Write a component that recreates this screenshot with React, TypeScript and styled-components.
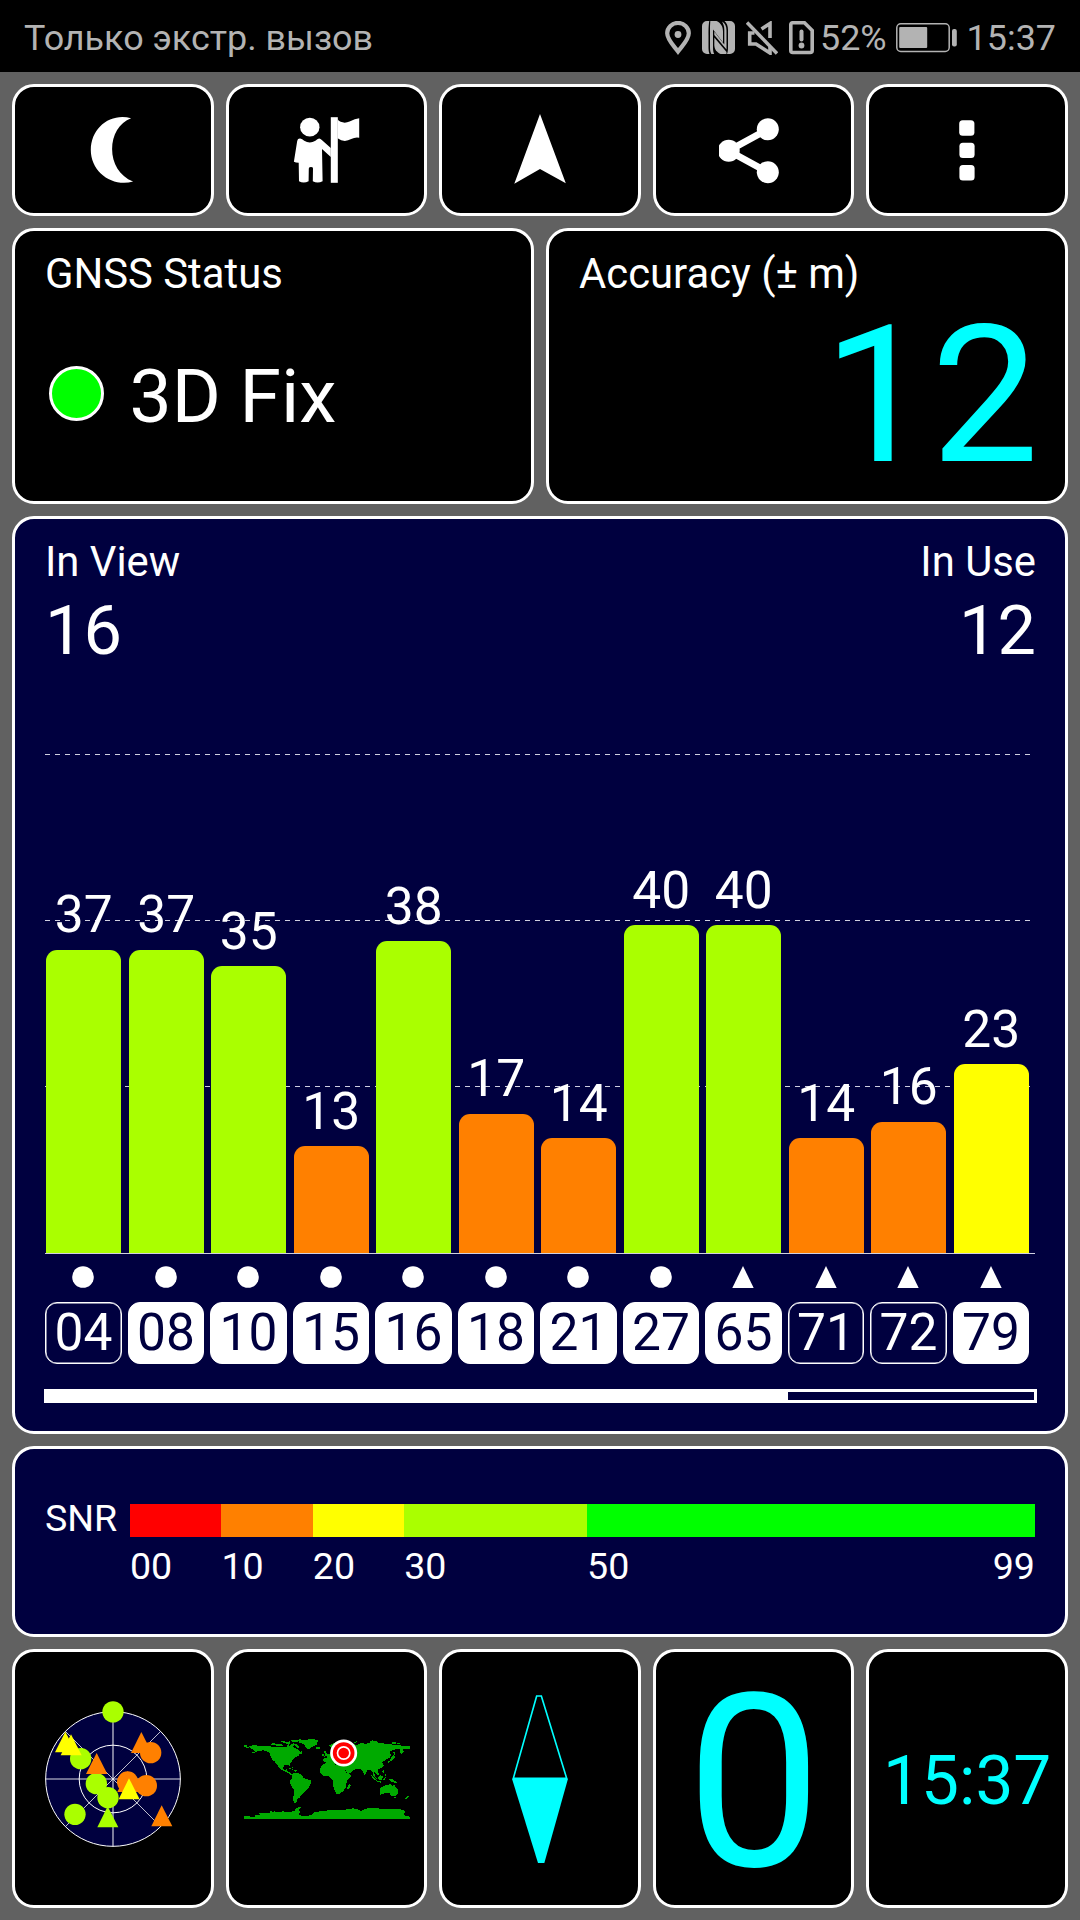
import React from 'react';
import styled, { createGlobalStyle } from 'styled-components';

const NAVY = '#00003f';
const LIME = '#aaff00';
const ORANGE = '#ff8000';
const YELLOW = '#ffff00';
const CYAN = '#00ffff';
const MUTED = '#b3b3b3';

const GlobalStyle = createGlobalStyle`
  *, *::before, *::after { box-sizing: border-box; }
  body { margin: 0; background: #616161; }
`;

const Screen = styled.div`
  width: 1080px;
  height: 1920px;
  display: flex;
  flex-direction: column;
  background: #616161;
  color: #fff;
  font-family: Roboto, 'Noto Sans', sans-serif;
  overflow: hidden;
`;

const StatusBar = styled.header`
  height: 72px;
  flex: none;
  display: flex;
  align-items: center;
  justify-content: space-between;
  padding: 3px 24px 0 24px;
  background: #000;
  color: ${MUTED};
  font-size: 35.9px;
  line-height: 44px;
  white-space: nowrap;
`;

const StatusIcons = styled.div`
  display: flex;
  align-items: center;
  svg { display: block; flex: none; }
`;

const SystemIcons = styled.div`
  display: flex;
  gap: 11px;
  margin-right: 6px;
`;

const BatteryIcon = styled.svg`
  margin: 0 10px 0 9px;
`;

const Board = styled.main`
  flex: 1;
  display: grid;
  grid-template-rows: 132px 276px 918px 191px 259px;
  gap: 12px;
  padding: 12px;
`;

const ButtonRow = styled.div`
  display: grid;
  grid-template-columns: repeat(5, 1fr);
  gap: 12px;
`;

const HalfRow = styled.div`
  display: grid;
  grid-template-columns: 1fr 1fr;
  gap: 12px;
`;

const Panel = styled.section<{ $navy?: boolean }>`
  border: 3px solid #fff;
  border-radius: 22px;
  background: ${(p) => (p.$navy ? NAVY : '#000')};
  min-width: 0;
`;

const Tile = styled(Panel)`
  display: flex;
  align-items: center;
  justify-content: center;
  svg { display: block; }
`;

const InfoPanel = styled(Panel)`
  padding: 18.5px 30px 0;
  display: flex;
  flex-direction: column;
`;

const Heading = styled.h2`
  margin: 0;
  font-size: 41.8px;
  line-height: 48px;
  font-weight: 400;
  white-space: nowrap;
`;

const FixRow = styled.div`
  display: flex;
  align-items: center;
  gap: 26px;
  height: 90px;
  margin: 53px 0 0 3.5px;
  font-size: 75px;
  line-height: 90px;
`;

const FixLamp = styled.span`
  width: 55px;
  height: 55px;
  margin-top: -5px;
  border-radius: 50%;
  border: 3px solid #fff;
  background: #00ff00;
`;

const Accuracy = styled.div`
  margin: 8px -4px 0 0;
  text-align: right;
  color: ${CYAN};
  font-size: 192px;
  line-height: 180px;
`;

const SatellitePanel = styled(Panel)`
  padding: 19px 28px 27px 29px;
  display: flex;
  flex-direction: column;
`;

const Counts = styled.div`
  display: flex;
  justify-content: space-between;
  padding: 0 1px;
`;

const Count = styled.div<{ $end?: boolean }>`
  text-align: ${(p) => (p.$end ? 'right' : 'left')};
`;

const CountValue = styled.div`
  font-size: 68.5px;
  line-height: 80px;
  margin-top: 5px;
`;

const Chart = styled.div`
  position: relative;
  height: 583px;
  margin: 0 2px 0 1px;
  border-bottom: 1px solid #d0d0e0;
  display: grid;
  grid-template-columns: repeat(12, 1fr);
  align-items: end;
`;

const GridLine = styled.div`
  position: absolute;
  left: 0;
  right: 0;
  height: 1px;
  background: repeating-linear-gradient(90deg, #cfcfdf 0 5px, transparent 5px 10px);
`;

const BarSlot = styled.div`
  position: relative;
  display: flex;
  flex-direction: column;
  align-items: center;
  padding: 0 6.2px 0 1px;
`;

const BarValue = styled.div`
  font-size: 51.5px;
  line-height: 60px;
  margin-bottom: 4.5px;
`;

const BarFill = styled.div`
  width: 100%;
  border-radius: 11px 11px 0 0;
`;

const SatelliteRow = styled.div`
  display: grid;
  grid-template-columns: repeat(12, 1fr);
  margin: 12px 2px 0 1px;
`;

const Satellite = styled.div`
  display: flex;
  flex-direction: column;
  align-items: center;
  gap: 14px;
  padding-right: 5.7px;
  svg { display: block; }
`;

const Chip = styled.div<{ $used: boolean }>`
  width: 100%;
  height: 62px;
  border: 1px solid #fff;
  box-shadow: inset 0 0 0 0.5px #fff;
  border-radius: 12px;
  display: flex;
  align-items: center;
  justify-content: center;
  font-size: 51.5px;
  line-height: 58px;
  background: ${(p) => (p.$used ? '#fff' : 'transparent')};
  color: ${(p) => (p.$used ? NAVY : '#fff')};
`;

const PageTrack = styled.div`
  height: 14px;
  margin-top: 25px;
  border: 3px solid #fff;
`;

const PageThumb = styled.div`
  width: 75.1%;
  height: 100%;
  background: #fff;
`;

const SnrPanel = styled(Panel)`
  padding: 47px 30px 0;
  display: flex;
  font-size: 37.6px;
`;

const SnrLabel = styled.div`
  width: 85px;
  line-height: 44px;
`;

const SnrScale = styled.div`
  flex: 1;
  display: grid;
  grid-template-columns: 10fr 10fr 10fr 20fr 49fr;
  grid-template-rows: 33.5px 44px;
  row-gap: 6px;
  padding-top: 7.5px;
`;

const SnrBand = styled.div<{ $color: string }>`
  background: ${(p) => p.$color};
`;

const SnrTick = styled.div`
  display: flex;
  justify-content: space-between;
  line-height: 46px;
`;

const Speed = styled.div`
  padding: 10px 0 0 1px;
  color: ${CYAN};
  font-size: 241px;
  line-height: 240px;
`;

const Clock = styled.div`
  padding-top: 4px;
  color: ${CYAN};
  font-size: 67.6px;
  line-height: 84px;
  white-space: nowrap;
`;

type Sat = { id: string; snr: number; color: string; used: boolean; glonass?: boolean };

const satellites: Sat[] = [
  { id: '04', snr: 37, color: LIME, used: false },
  { id: '08', snr: 37, color: LIME, used: true },
  { id: '10', snr: 35, color: LIME, used: true },
  { id: '15', snr: 13, color: ORANGE, used: true },
  { id: '16', snr: 38, color: LIME, used: true },
  { id: '18', snr: 17, color: ORANGE, used: true },
  { id: '21', snr: 14, color: ORANGE, used: true },
  { id: '27', snr: 40, color: LIME, used: true },
  { id: '65', snr: 40, color: LIME, used: true, glonass: true },
  { id: '71', snr: 14, color: ORANGE, used: false, glonass: true },
  { id: '72', snr: 16, color: ORANGE, used: false, glonass: true },
  { id: '79', snr: 23, color: YELLOW, used: true, glonass: true },
];

const PX_PER_DB = 8.2;

const bands = [
  { color: '#ff0000', from: '00' },
  { color: ORANGE, from: '10' },
  { color: YELLOW, from: '20' },
  { color: LIME, from: '30' },
  { color: '#00ff00', from: '50', to: '99' },
];

const PinIcon = () => (
  <svg width="26" height="34" viewBox="664 20 26 34" fill="none">
    <path d="M677 50.5C672 44 666.2 38.5 666.2 32.3a10.8 10.4 0 0 1 21.6 0C687.8 38.5 682 44 677 50.5Z" stroke={MUTED} strokeWidth="4.2" />
    <circle cx="677" cy="33.5" r="3.4" fill={MUTED} />
  </svg>
);

const NfcIcon = () => (
  <svg width="33" height="34" viewBox="0 0 33 34">
    <path fill={MUTED} d="M5 0h2.300c-.6 3-.8 7-.8 14v12c0 3 .3 5 1 7H5a5 5 0 0 1-5-5V5a5 5 0 0 1 5-5Z" />
    <path fill={MUTED} d="M8.300 0H14.500c4.500 2 6.500 5.500 6.500 10.500v11L11 8.500v18c0 3 .4 4.800 1.200 6.500H9.400C8.300 31 8 29 8 26V5Z" />
    <path fill={MUTED} d="M22.500 0H28a5 5 0 0 1 5 5v23a5 5 0 0 1-5 5h-3c.8-2 1-4 1-7V9c0-4-1.200-7-3.500-9Z" />
    <path fill={MUTED} d="M12.300 16.500 24.500 31v2H18.500c-4.200-2-6.200-5-6.200-9.500Z" />
    <path fill={MUTED} d="M12.300 10.500 22.300 23.500V9c0-3.500-.8-6-2.300-8.500 3 1.500 4.500 4.500 4.500 9V28.500L12.300 14Z" />
  </svg>
);

const MuteIcon = () => (
  <svg width="32" height="34" viewBox="0 0 32 34" fill="none" stroke={MUTED}>
    <path d="M1 1.500 31 32.500" strokeWidth="3.500" />
    <path d="M15.500 8 24 2.500V17" strokeWidth="3.600" />
    <path d="M8.500 12H3.700v11H10L24 32v-6" strokeWidth="3.600" />
  </svg>
);

const SimAlertIcon = () => (
  <svg width="25" height="34" viewBox="0 0 25 34" fill="none">
    <path d="M3.500 1.800H15.500L23.200 9.500V29.500a2 2 0 0 1-2 2H3.800a2 2 0 0 1-2-2V3.500a1.700 1.700 0 0 1 1.700-1.700Z" stroke={MUTED} strokeWidth="3.600" />
    <path d="M12.500 10.500v8" stroke={MUTED} strokeWidth="4" strokeLinecap="round" />
    <circle cx="12.500" cy="24.500" r="2.900" fill={MUTED} />
  </svg>
);

const Battery = () => (
  <BatteryIcon width="61" height="30" viewBox="0 0 61 30">
    <rect x=".8" y=".8" width="52.400" height="27.700" rx="4" fill="none" stroke={MUTED} strokeWidth="1.500" />
    <rect x="3.200" y="4" width="28" height="21" rx="1" fill={MUTED} />
    <rect x="56" y="6" width="4.800" height="17.500" rx="2" fill={MUTED} />
  </BatteryIcon>
);

const MoonIcon = () => (
  <svg width="70" height="70" viewBox="77.8 115 70 70" fill="#fff">
    <path d="M130.900 118.200C110 112.500 90.600 128 90.600 150S112 187.500 132.900 181.600C119 176 111.900 163 111.900 149S119 122.500 130.900 118.200Z" />
  </svg>
);

const WaypointIcon = () => (
  <svg width="70" height="70" viewBox="290.4 115 70 70" fill="#fff">
    <ellipse cx="309.200" cy="127.200" rx="9.700" ry="9.400" />
    <rect x="330.200" y="117.200" width="7" height="65.600" />
    <path d="M337 119.300q1 1.500 3 2.500 4.500 1.800 9-.3 5.500-3 9.600-3.300v19.600q-4-.8-8 1.300-7 4-13.600-.8Z" />
    <path d="M296.600 141q.4-2.600 3-2.400 2 .2 4 2.200 5.600 3.600 11.200 0 2-2 3.700-2.200 1.500 0 2.700 1.500l9 7.800v9.200l-8.800-8 .6 32.200q-5 2.400-9.800 0l.2-12.800q0-1.400-2-1.400t-2.200 1.400l-.2 12.800q-5 2.400-9.600 0l-.3-18.500q-3 0-4.800-1Z" />
  </svg>
);

const NavigateIcon = () => (
  <svg width="70" height="70" viewBox="505 115 70 70" overflow="visible" fill="#fff">
    <path d="M540 114 565.800 183.200 540 169 514.300 183.800Z" />
  </svg>
);

const ShareIcon = () => (
  <svg width="70" height="70" viewBox="719.2 115 70 70" fill="#fff">
    <path d="M768 129.300 728.700 150.700 768 172.300" fill="none" stroke="#fff" strokeWidth="6.800" />
    <circle cx="728.900" cy="150.700" r="11" />
    <circle cx="768" cy="129.300" r="11" />
    <circle cx="768" cy="172.200" r="11" />
  </svg>
);

const MoreIcon = () => (
  <svg width="70" height="70" viewBox="932.2 115 70 70" fill="#fff">
    <rect x="959.400" y="120.200" width="15.200" height="15.600" rx="3.500" />
    <rect x="959.600" y="142.700" width="15.200" height="15.400" rx="3.500" />
    <rect x="959.600" y="165" width="15.200" height="15.500" rx="3.500" />
  </svg>
);

const SatMarker = ({ triangle }: { triangle?: boolean }) => (
  <svg width="22" height="22" viewBox="0 0 22 22" fill="#fff">
    {triangle ? <path d="M11 0 21.700 22H.3Z" /> : <circle cx="11" cy="11" r="10.800" />}
  </svg>
);

const SkyPlot = () => (
  <svg width="160" height="160" viewBox="38 56 480 480">
    <circle cx="278" cy="296" r="202" fill={NAVY} />
    <g fill="none" stroke="#fff">
      <circle cx="278" cy="296" r="202" strokeWidth="3" />
      <circle cx="278" cy="296" r="101.500" strokeWidth="3" />
      <path d="M278 94V498M76 296H480" strokeWidth="3.400" opacity=".85" />
      <path d="M135 153 421 439M421 153 135 439" strokeWidth="3" opacity=".75" />
    </g>
    <g fill={LIME}>
      <circle cx="278" cy="94.500" r="32" />
      <circle cx="181" cy="235" r="32" />
      <circle cx="164" cy="402" r="32" />
      <circle cx="228" cy="310" r="32" />
      <path d="M262 378 294 441H231Z" />
      <circle cx="263" cy="352" r="32" />
    </g>
    <g fill={ORANGE}>
      <path d="M363 155 395 218H332Z" />
      <circle cx="391" cy="217" r="32" />
      <path d="M229 218 261 281H197Z" />
      <circle cx="322" cy="305" r="32" />
      <path d="M322 272 354 335H291Z" />
      <circle cx="378" cy="316" r="32" />
      <path d="M424 375 456 438H393Z" />
    </g>
    <g fill={YELLOW}>
      <path d="M135 154 167 216H104Z" />
      <path d="M152 162 184 225H121Z" />
      <path d="M326 294 358 357H295Z" />
    </g>
  </svg>
);

const WorldMap = () => (
  <svg width="168" height="85" viewBox="33 50 504 255">
    <g fill="#00aa00" shapeRendering="crispEdges">
      <path d="M40 78h8v4H40ZM44 83h10v4H44ZM52 80 68 78 86 79 100 81 115 80 125 83 140 82 158 83 170 81 178 79 182 72 190 76 186 83 194 87 200 90 210 98 213 104 202 106 206 110 196 112 190 118 183 124 180 130 176 136 178 144 173 138 163 137 158 140 157 147 161 152 168 150 168 155 175 158 178 162 184 166 178 166 170 160 160 155 150 151 145 147 141 140 135 133 132 127 124 121 119 111 117 102 108 96 98 93 88 94 80 96 68 102 62 100 72 96 66 91 60 88Z" />
      <path d="M120 73 132 70 134 76 122 78ZM135 74 148 73 160 78 146 80 136 79ZM148 65 162 66 164 70 150 69ZM164 68 178 66 176 73 164 73ZM180 62 196 61 210 60 208 64 196 68 184 69ZM186 72 200 76 206 83 200 88 194 80ZM170 75 178 76 174 80 168 79ZM203 98 213 96 214 101 206 102Z" />
      <path d="M203 65 214 62 236 60 250 60 264 64 258 70 260 75 250 80 240 83 234 91 226 87 222 79 216 74 204 70ZM254 84 268 84 266 88 256 88Z" />
      <path d="M168 145 180 147 186 151 178 150ZM188 152 200 153 196 157 188 156ZM184 142h3v4h-3Z" />
      <path d="M184 165 190 160 204 162 213 167 218 176 230 180 242 184 238 194 234 203 226 212 220 220 212 225 207 234 198 240 196 250 190 250 186 242 188 226 190 212 182 202 177 192 178 182 184 178Z" />
      <path d="M276 125 278 116 289 115 285 109 292 105 300 100 304 94 303 85 308 78 320 71 335 68 350 73 370 73 376 78 384 74 392 71 404 74 416 70 424 66 438 66 442 71 452 72 464 73 480 75 496 77 514 79 537 80 537 88 520 88 514 92 518 96 512 105 506 98 506 90 494 90 484 93 476 98 480 108 476 115 464 120 460 126 456 124 454 131 458 138 452 146 442 150 440 157 444 165 439 168 434 162 429 155 432 170 438 178 434 178 427 169 425 158 418 151 410 152 405 161 402 168 396 158 392 151 378 148 369 152 362 158 350 164 345 156 336 140 327 138 316 136 308 133 296 132 286 130Z" />
      <path d="M278 134 288 129 302 128 306 134 320 137 336 139 346 160 352 165 362 166 357 176 348 184 346 194 344 205 336 216 326 223 316 223 309 210 306 196 306 184 300 176 294 171 280 171 270 164 266 152 270 141ZM356 192 360 198 354 210 349 209 350 199Z" />
      <path d="M278 96 284 94 288 104 292 108 280 112 283 105ZM274 103h6v6h-6ZM295 78 306 72 318 68 322 72 302 87Z" />
      <path d="M332 66h14v3h-14ZM366 68 378 66 372 72ZM416 66 426 63 432 67 424 70ZM484 69h10v4h-10ZM498 72h8v3h-8Z" />
      <path d="M421 168 430 174 438 184 431 183 424 175ZM436 184 452 187 450 190 438 188ZM441 174 449 168 456 172 452 182 443 180ZM458 176 464 174 462 184 457 182ZM455 150 460 153 458 162 454 158ZM460 164 467 166 465 171ZM472 178 484 180 496 187 498 192 486 189 476 184Z" />
      <path d="M482 113 488 108 492 112 488 120 482 125 475 127ZM487 98 493 100 490 108ZM470 124h4v6h-4Z" />
      <path d="M447 207 456 202 464 197 473 196 480 194 484 202 489 193 493 202 501 210 502 220 495 230 482 230 474 220 461 222 448 226 446 218ZM490 233h6v4h-6ZM530 228 534 230 528 238 520 240 526 235Z" />
      <path d="M40 291 52 291 74 293 72 287 86 286 80 280 102 281 124 279 150 279 176 278 192 274 194 268 208 262 210 266 202 272 208 278 202 284 214 290 230 290 246 284 252 277 276 276 290 273 310 272 334 272 350 270 366 267 382 271 390 275 402 268 424 266 450 268 480 268 510 270 524 275 518 284 524 290 537 292V299H40Z" />
      <path d="M118 275h6v3h-6ZM128 275h5v3h-5ZM152 275h6v3h-6Z" />
    </g>
    <circle cx="338" cy="101" r="40.500" fill="#fff" />
    <circle cx="338" cy="101" r="32.500" fill="#f00" />
    <circle cx="338" cy="101" r="18.500" fill="none" stroke="#fff" strokeWidth="5" />
  </svg>
);

const Compass = () => (
  <svg width="60" height="172" viewBox="240 158 180 516">
    <path d="M320 167H334L410 414H250Z" fill="none" stroke={CYAN} strokeWidth="5" />
    <path d="M246 415H414L343 668H324Z" fill={CYAN} />
  </svg>
);

export default function App() {
  return (
    <>
      <GlobalStyle />
      <Screen>
        <StatusBar>
          <span>Только экстр. вызов</span>
          <StatusIcons>
            <SystemIcons>
              <PinIcon />
              <NfcIcon />
              <MuteIcon />
              <SimAlertIcon />
            </SystemIcons>
            <span>52%</span>
            <Battery />
            <span>15:37</span>
          </StatusIcons>
        </StatusBar>
        <Board>
          <ButtonRow>
            <Tile><MoonIcon /></Tile>
            <Tile><WaypointIcon /></Tile>
            <Tile><NavigateIcon /></Tile>
            <Tile><ShareIcon /></Tile>
            <Tile><MoreIcon /></Tile>
          </ButtonRow>
          <HalfRow>
            <InfoPanel>
              <Heading>GNSS Status</Heading>
              <FixRow><FixLamp />3D Fix</FixRow>
            </InfoPanel>
            <InfoPanel>
              <Heading>Accuracy (± m)</Heading>
              <Accuracy>12</Accuracy>
            </InfoPanel>
          </HalfRow>
          <SatellitePanel $navy>
            <Counts>
              <Count>
                <Heading>In View</Heading>
                <CountValue>16</CountValue>
              </Count>
              <Count $end>
                <Heading>In Use</Heading>
                <CountValue>12</CountValue>
              </Count>
            </Counts>
            <Chart>
              {[60, 40, 20].map((level) => (
                <GridLine key={level} style={{ bottom: level * 8.3 }} />
              ))}
              {satellites.map((s) => (
                <BarSlot key={s.id}>
                  <BarValue>{s.snr}</BarValue>
                  <BarFill style={{ height: s.snr * PX_PER_DB, background: s.color }} />
                </BarSlot>
              ))}
            </Chart>
            <SatelliteRow>
              {satellites.map((s) => (
                <Satellite key={s.id}>
                  <SatMarker triangle={s.glonass} />
                  <Chip $used={s.used}>{s.id}</Chip>
                </Satellite>
              ))}
            </SatelliteRow>
            <PageTrack><PageThumb /></PageTrack>
          </SatellitePanel>
          <SnrPanel $navy>
            <SnrLabel>SNR</SnrLabel>
            <SnrScale>
              {bands.map((b) => <SnrBand key={b.from} $color={b.color} />)}
              {bands.map((b) => (
                <SnrTick key={b.from}>
                  <span>{b.from}</span>
                  {b.to && <span>{b.to}</span>}
                </SnrTick>
              ))}
            </SnrScale>
          </SnrPanel>
          <ButtonRow>
            <Tile><SkyPlot /></Tile>
            <Tile><WorldMap /></Tile>
            <Tile><Compass /></Tile>
            <Tile><Speed>0</Speed></Tile>
            <Tile><Clock>15:37</Clock></Tile>
          </ButtonRow>
        </Board>
      </Screen>
    </>
  );
}
